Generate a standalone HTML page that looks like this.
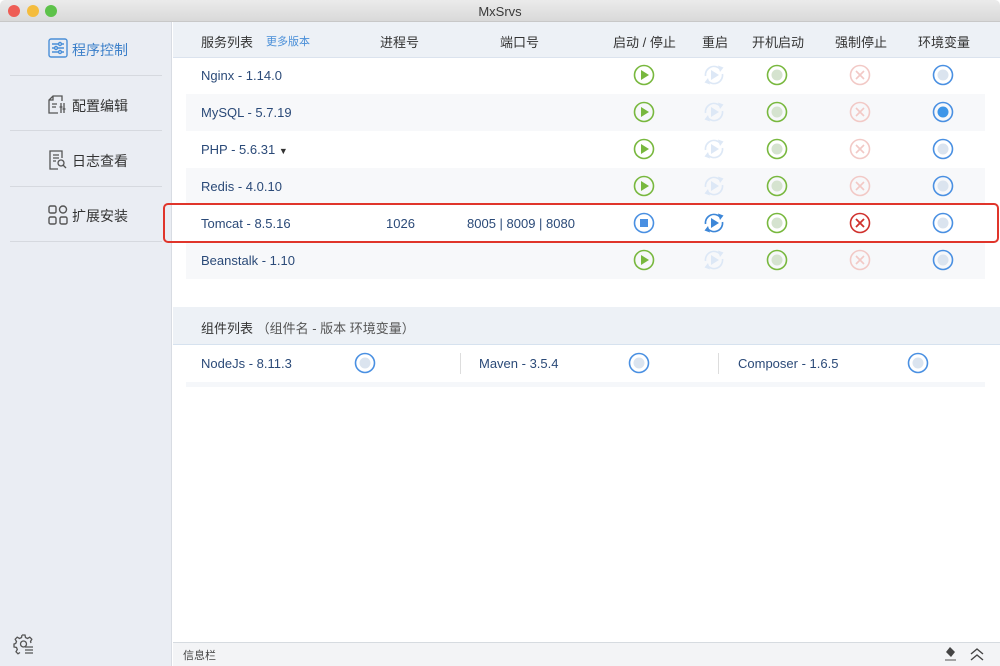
<!DOCTYPE html>
<html><head><meta charset="utf-8"><style>
*{margin:0;padding:0;box-sizing:border-box}
body{width:1000px;height:666px;overflow:hidden;font-family:"Liberation Sans","Noto Sans CJK SC",sans-serif;background:#fff;position:relative;color:#2b4a78}
.a{position:absolute}
.t{font-size:13px;white-space:nowrap}
</style></head><body>
<div class="a" style="left:0;top:0;width:1000px;height:22px;background:linear-gradient(#ebebeb,#d9d9d9);border-bottom:1px solid #c8c8c8;border-radius:5px 5px 0 0"></div>
<div class="a" style="left:8px;top:5px;width:12px;height:12px;border-radius:6px;background:#ee5d55"></div>
<div class="a" style="left:27px;top:5px;width:12px;height:12px;border-radius:6px;background:#f4bc3d"></div>
<div class="a" style="left:45px;top:5px;width:12px;height:12px;border-radius:6px;background:#5dc24a"></div>
<div class="a t" style="left:0;width:1000px;top:4px;text-align:center;color:#3a3a3a;font-size:13px">MxSrvs</div>
<div class="a" style="left:0;top:22px;width:172px;height:644px;background:#eaedf3;border-right:1px solid #d8dce3"></div>
<div class="a" style="left:10px;top:75px;width:152px;height:1px;background:#d6d9df"></div>
<div class="a" style="left:10px;top:130px;width:152px;height:1px;background:#d6d9df"></div>
<div class="a" style="left:10px;top:186px;width:152px;height:1px;background:#d6d9df"></div>
<div class="a" style="left:10px;top:241px;width:152px;height:1px;background:#d6d9df"></div>
<svg class="a" style="left:48px;top:38px" width="20" height="20" viewBox="0 0 20 20" fill="none" stroke="#4a8fd8" stroke-width="1.4"><rect x="1" y="1" width="18" height="18" rx="2"/><path d="M4 6h12M4 10h12M4 14h12"/><circle cx="12" cy="6" r="1.5" fill="#eaedf3"/><circle cx="8" cy="10" r="1.5" fill="#eaedf3"/><circle cx="12" cy="14" r="1.5" fill="#eaedf3"/></svg>
<div class="a t" style="left:72px;top:40px;font-size:14px;color:#3b7fc9">程序控制</div>
<svg class="a" style="left:48px;top:94px" width="20" height="20" viewBox="0 0 20 20" fill="none" stroke="#555" stroke-width="1.3"><path d="M14 7V2H5L1 6v13h9M1 6h4V2M4 10h5M4 13h4M13 9v10M16 9v10M11.5 13h3M14.5 15h3"/></svg>
<div class="a t" style="left:72px;top:96px;font-size:14px;color:#333">配置编辑</div>
<svg class="a" style="left:48px;top:150px" width="20" height="20" viewBox="0 0 20 20" fill="none" stroke="#555" stroke-width="1.3"><path d="M10 19H2V1h12v7M5 5h6M5 8h6M5 11h3"/><circle cx="13" cy="13" r="3"/><path d="M15 15l3 3"/></svg>
<div class="a t" style="left:72px;top:151px;font-size:14px;color:#333">日志查看</div>
<svg class="a" style="left:48px;top:205px" width="20" height="20" viewBox="0 0 20 20" fill="none" stroke="#555" stroke-width="1.4"><rect x="1" y="1" width="7" height="7" rx="1.5"/><circle cx="15" cy="4.5" r="3.5"/><rect x="1" y="12" width="7" height="7" rx="1.5"/><rect x="12" y="12" width="7" height="7" rx="1.5"/></svg>
<div class="a t" style="left:72px;top:206px;font-size:14px;color:#333">扩展安装</div>
<svg class="a" style="left:13px;top:633px" width="22" height="22" viewBox="0 0 22 22" fill="none" stroke="#555" stroke-width="1.3"><path d="M9 2h3l.5 2.5 2 1 2.3-1.3 2 2-1.3 2.3.5 1.5M9 2l-.5 2.5-2 1L4.2 4.2l-2 2 1.3 2.3-.8 2L1 11v3l2.5.5.8 2-1.3 2.3 2 2L7 19.5"/><circle cx="10.5" cy="11" r="3"/><path d="M12 14h8M12 17h8M12 20h8"/></svg>
<div class="a" style="left:173px;top:22px;width:827px;height:36px;background:#edf1f6;border-bottom:1px solid #dbe3ee"></div>
<div class="a t" style="left:201px;top:32px;color:#333;font-size:13px">服务列表</div>
<div class="a t" style="left:266px;top:33px;color:#4a8fd8;font-size:11px">更多版本</div>
<div class="a t" style="left:380px;top:32px;color:#333">进程号</div>
<div class="a t" style="left:500px;top:32px;color:#333">端口号</div>
<div class="a t" style="left:613px;top:32px;color:#333">启动 / 停止</div>
<div class="a t" style="left:702px;top:32px;color:#333">重启</div>
<div class="a t" style="left:752px;top:32px;color:#333">开机启动</div>
<div class="a t" style="left:835px;top:32px;color:#333">强制停止</div>
<div class="a t" style="left:918px;top:32px;color:#333">环境变量</div>
<div class="a" style="left:186px;top:94px;width:799px;height:37px;background:#f7f8fa"></div>
<div class="a" style="left:186px;top:168px;width:799px;height:37px;background:#f7f8fa"></div>
<div class="a" style="left:186px;top:242px;width:799px;height:37px;background:#f7f8fa"></div>
<div class="a t" style="left:201px;top:68px">Nginx - 1.14.0</div>
<div class="a t" style="left:201px;top:105px">MySQL - 5.7.19</div>
<div class="a t" style="left:201px;top:142px">PHP - 5.6.31 <span style="font-size:9px;color:#333">▼</span></div>
<div class="a t" style="left:201px;top:179px">Redis - 4.0.10</div>
<div class="a t" style="left:201px;top:216px">Tomcat - 8.5.16</div>
<div class="a t" style="left:386px;top:216px">1026</div>
<div class="a t" style="left:467px;top:216px">8005 | 8009 | 8080</div>
<div class="a t" style="left:201px;top:253px">Beanstalk - 1.10</div>
<div class="a" style="left:163px;top:203px;width:836px;height:40px;border:2px solid #e0352b;border-radius:5px"></div>
<svg class="a" style="left:0;top:0" width="1000" height="400">
<defs>
<g id="play"><circle r="9.5" fill="none" stroke="#78b83e" stroke-width="1.6"/><path d="M-3-5L5 0-3 5z" fill="#78b83e"/></g>
<g id="rs"><path d="M-8.5 1A8.5 8.5 0 0 1 6.5 -5.5M8.5 -1A8.5 8.5 0 0 1 -6.5 5.5" fill="none" stroke-width="1.6"/><path d="M4-9.5l5.5 2-3.5 4.5zM-4 9.5l-5.5-2 3.5-4.5z" stroke="none"/><path d="M-3-5L5 0-3 5z" stroke="none"/></g>
<g id="boot"><circle r="9.5" fill="none" stroke="#78b83e" stroke-width="1.6"/><circle r="5.5" fill="#d5e3cf"/></g>
<g id="kill"><circle r="9.5" fill="none" stroke="#f2c9c6" stroke-width="1.6"/><path d="M-4-4L4 4M4-4L-4 4" stroke="#f2c9c6" stroke-width="1.6"/></g>
<g id="env"><circle r="9.5" fill="none" stroke="#4a90e2" stroke-width="1.6"/><circle r="5.5" fill="#dbe4ef"/></g>
</defs>
<g transform="translate(644,75)"><use href="#play"/></g><g transform="translate(644,112)"><use href="#play"/></g><g transform="translate(644,149)"><use href="#play"/></g><g transform="translate(644,186)"><use href="#play"/></g><g transform="translate(644,260)"><use href="#play"/></g>
<g transform="translate(644,223)"><circle r="9.5" fill="none" stroke="#4a90e2" stroke-width="1.6"/><rect x="-4" y="-4" width="8" height="8" fill="#4a90e2"/></g>
<g fill="#dde8f6" stroke="#dde8f6"><use href="#rs" x="714" y="75"/><use href="#rs" x="714" y="112"/><use href="#rs" x="714" y="149"/><use href="#rs" x="714" y="186"/><use href="#rs" x="714" y="260"/></g>
<g fill="#3d87d8" stroke="#3d87d8"><use href="#rs" x="714" y="223"/></g>
<use href="#boot" x="777" y="75"/><use href="#boot" x="777" y="112"/><use href="#boot" x="777" y="149"/><use href="#boot" x="777" y="186"/><use href="#boot" x="777" y="223"/><use href="#boot" x="777" y="260"/>
<use href="#kill" x="860" y="75"/><use href="#kill" x="860" y="112"/><use href="#kill" x="860" y="149"/><use href="#kill" x="860" y="186"/><use href="#kill" x="860" y="260"/>
<g transform="translate(860,223)"><circle r="9.5" fill="none" stroke="#d0312d" stroke-width="1.6"/><path d="M-4-4L4 4M4-4L-4 4" stroke="#d0312d" stroke-width="1.8"/></g>
<use href="#env" x="943" y="75"/><use href="#env" x="943" y="149"/><use href="#env" x="943" y="186"/><use href="#env" x="943" y="223"/><use href="#env" x="943" y="260"/>
<g transform="translate(943,112)"><circle r="9.5" fill="none" stroke="#4a90e2" stroke-width="1.6"/><circle r="5.5" fill="#3d95e8"/></g>
<use href="#env" x="365" y="363"/><use href="#env" x="639" y="363"/><use href="#env" x="918" y="363"/>
</svg>
<div class="a" style="left:173px;top:307px;width:827px;height:38px;background:#edf1f6;border-bottom:1px solid #d6e2ef"></div>
<div class="a t" style="left:201px;top:318px;color:#333">组件列表 <span style="color:#555">（组件名 - 版本 环境变量）</span></div>
<div class="a t" style="left:201px;top:356px">NodeJs - 8.11.3</div>
<div class="a t" style="left:479px;top:356px">Maven - 3.5.4</div>
<div class="a t" style="left:738px;top:356px">Composer - 1.6.5</div>
<div class="a" style="left:460px;top:353px;width:1px;height:21px;background:#ddd"></div>
<div class="a" style="left:718px;top:353px;width:1px;height:21px;background:#ddd"></div>
<div class="a" style="left:186px;top:382px;width:799px;height:5px;background:#f5f7fa"></div>
<div class="a" style="left:173px;top:642px;width:827px;height:24px;background:#f3f4f6;border-top:1px solid #d6dbe0"></div>
<div class="a t" style="left:183px;top:647px;font-size:11px;color:#444">信息栏</div>
<svg class="a" style="left:943px;top:646px" width="16" height="16" viewBox="0 0 16 16"><path d="M7 1l5 5-4 5-5-5z" fill="#444"/><path d="M2 14h11" stroke="#888" stroke-width="1.5"/></svg>
<svg class="a" style="left:969px;top:646px" width="16" height="16" viewBox="0 0 16 16" fill="none" stroke="#444" stroke-width="1.4"><path d="M2 8l6-5 6 5M2 14l6-5 6 5"/></svg>
</body></html>
